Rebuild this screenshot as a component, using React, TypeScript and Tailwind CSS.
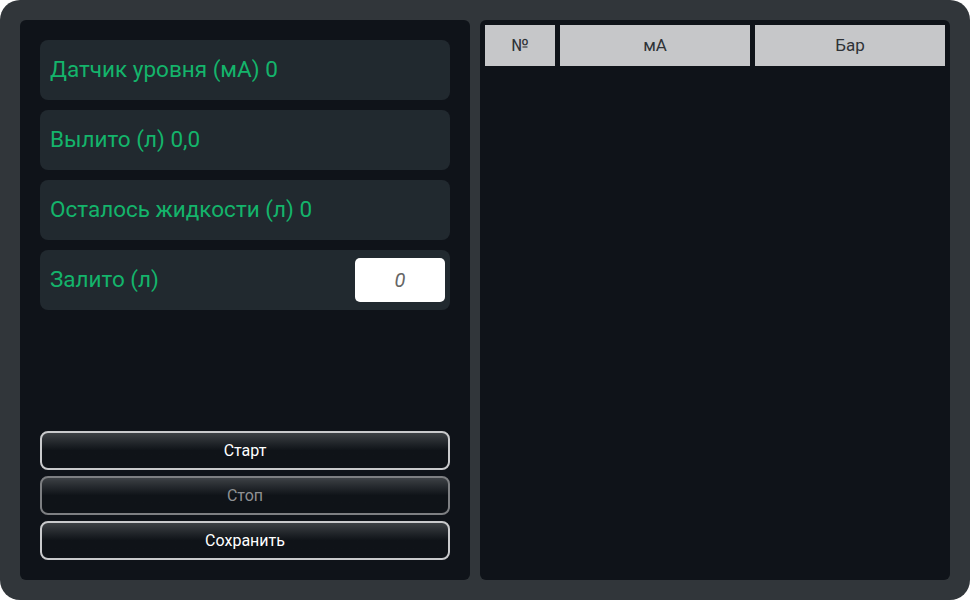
export default function App() {
  const rows = [
    "Датчик уровня (мА) 0",
    "Вылито (л) 0,0",
    "Осталось жидкости (л) 0",
  ];

  return (
    <div className="w-[970px] h-[600px] bg-white font-['Roboto',sans-serif]">
      <div className="w-full h-full rounded-[20px] bg-[#31363a] p-5 flex gap-[10px]">
        {/* Left panel */}
        <div className="w-[450px] h-full rounded-md bg-[#0f1319] p-5 flex flex-col">
          <div className="flex flex-col gap-[10px]">
            {rows.map((r) => (
              <div
                key={r}
                className="h-[60px] rounded-lg bg-[#21292f] px-[10px] flex items-center text-[22.5px] text-[#14b46b]"
              >
                {r}
              </div>
            ))}
            <div className="h-[60px] rounded-lg bg-[#21292f] pl-[10px] pr-[5px] flex items-center justify-between text-[22.5px] text-[#14b46b]">
              <span>Залито (л)</span>
              <input
                defaultValue="0"
                className="w-[90px] h-[44px] rounded-[5px] bg-white text-center italic text-[20px] text-[#666] outline-none"
              />
            </div>
          </div>

          <div className="mt-auto flex flex-col gap-[6px]">
            <button className="h-[39px] rounded-lg border-2 border-[#c9cacc] bg-gradient-to-b from-[#3d4145] via-[#0f1318] to-[#0f1318] text-white text-[16px] font-normal">
              Старт
            </button>
            <button className="h-[39px] rounded-lg border-2 border-[#7d7f82] bg-gradient-to-b from-[#3d4145] via-[#0f1318] to-[#0f1318] text-[#8f9194] text-[16px] font-normal">
              Стоп
            </button>
            <button className="h-[39px] rounded-lg border-2 border-[#c9cacc] bg-gradient-to-b from-[#3d4145] via-[#0f1318] to-[#0f1318] text-white text-[16px] font-normal">
              Сохранить
            </button>
          </div>
        </div>

        {/* Right panel */}
        <div className="flex-1 h-full rounded-md bg-[#0f1319] p-[5px]">
          <div className="flex gap-[5px] h-[41px] text-[17px] text-[#2e3236]">
            <div className="w-[70px] bg-[#c6c7c9] flex items-center justify-center">№</div>
            <div className="flex-1 bg-[#c6c7c9] flex items-center justify-center">мА</div>
            <div className="flex-1 bg-[#c6c7c9] flex items-center justify-center">Бар</div>
          </div>
        </div>
      </div>
    </div>
  );
}
